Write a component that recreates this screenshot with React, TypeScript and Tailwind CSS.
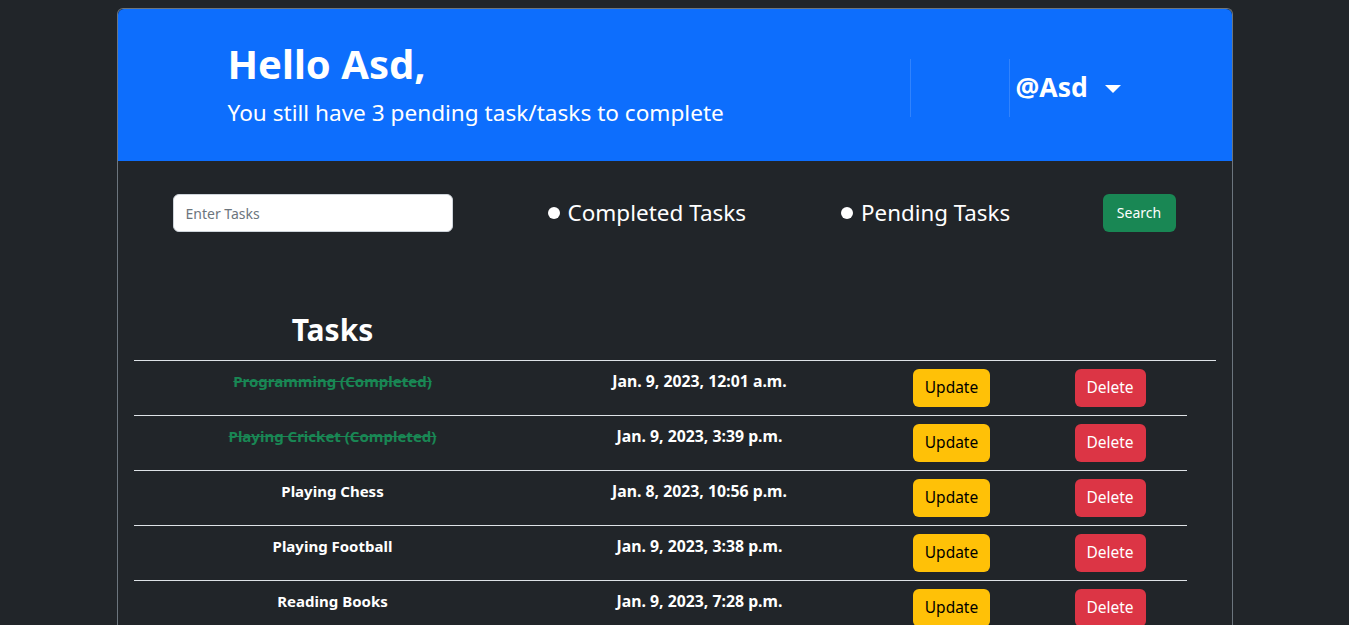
const tasks = [
    { title: 'Programming (Completed)', date: 'Jan. 9, 2023, 12:01 a.m.', done: true },
    { title: 'Playing Cricket (Completed)', date: 'Jan. 9, 2023, 3:39 p.m.', done: true },
    { title: 'Playing Chess', date: 'Jan. 8, 2023, 10:56 p.m.', done: false },
    { title: 'Playing Football', date: 'Jan. 9, 2023, 3:38 p.m.', done: false },
    { title: 'Reading Books', date: 'Jan. 9, 2023, 7:28 p.m.', done: false },
];

export default function App() {
    return (
        <div className="min-h-screen bg-[#212529] pt-2 font-['Noto_Sans',sans-serif] text-white">
            <div className="mx-auto w-[1116px] rounded-t-md border border-b-0 border-[#6c757d] pb-10">
                {/* Header */}
                <header className="flex h-[152px] items-center rounded-t-md bg-[#0d6efd]">
                    <div className="ml-[110px] w-[600px]">
                        <h1 className="text-[40px] font-bold leading-[48px]">Hello Asd,</h1>
                        <p className="mt-[8px] text-[22.6px] leading-[34px]">You still have 3 pending task/tasks to complete</p>
                    </div>
                    <div className="ml-[82px] mt-[6px] flex items-center">
                        <div className="h-[58px] w-[100px] border-x border-white/15" />
                        <span className="ml-[6px] text-[26.5px] font-bold">@Asd</span>
                        <span className="ml-[17px] mt-[2px] h-0 w-0 border-x-[8px] border-t-[8px] border-x-transparent border-t-white" />
                    </div>
                </header>

                {/* Search */}
                <div className="mt-[33px] flex items-center">
                    <input
                        placeholder="Enter Tasks"
                        className="ml-[55px] h-[38px] w-[280px] rounded-md border border-[#ced4da] bg-white px-3 text-sm text-black placeholder:text-[#6c757d] outline-none"
                    />
                    <label className="ml-[95px] flex items-center text-[22.5px]">
                        <span className="mr-2 h-3 w-3 rounded-full bg-white" />
                        Completed Tasks
                    </label>
                    <label className="ml-[95px] flex items-center text-[22.3px]">
                        <span className="mr-2 h-3 w-3 rounded-full bg-white" />
                        Pending Tasks
                    </label>
                    <button className="ml-auto mr-[56px] h-[38px] w-[73px] rounded-md bg-[#198754] text-sm">Search</button>
                </div>

                {/* Table */}
                <div className="ml-[16px] mt-[74px]">
                    <div className="w-[1082px] border-b border-[#dee2e6]">
                        <h2 className="w-[398px] pt-[2px] pb-[8px] text-center text-[30px] font-bold leading-[44px]">Tasks</h2>
                    </div>
                    {tasks.map(t => (
                        <div key={t.title} className="grid h-[55px] w-[1053px] grid-cols-[398px_336px_166px_153px] border-b border-[#dee2e6] pt-[8px] text-center">
                            <p className={`text-[15px] font-bold leading-6 ${t.done ? 'text-[#198754] line-through' : 'text-white'}`}>{t.title}</p>
                            <p className="text-[15.8px] font-bold leading-6">{t.date}</p>
                            <div>
                                <button className="ml-[2px] h-[38px] w-[77px] rounded-md bg-[#ffc107] text-[15.5px] text-black">Update</button>
                            </div>
                            <div>
                                <button className="h-[38px] w-[71px] rounded-md bg-[#dc3545] text-[15.5px] text-white">Delete</button>
                            </div>
                        </div>
                    ))}
                </div>
            </div>
        </div>
    );
}
